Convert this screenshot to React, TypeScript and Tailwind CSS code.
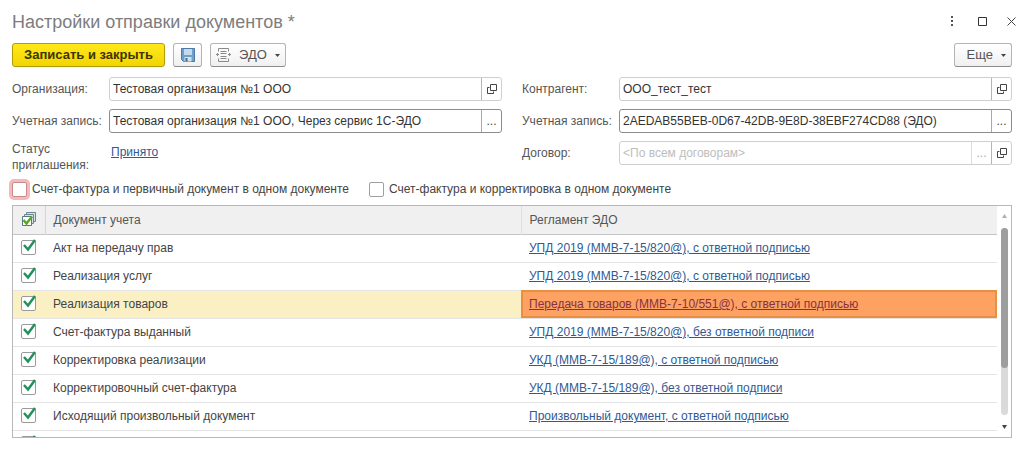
import { useState } from "react";

const documents = [
  { id: 1, name: "Акт на передачу прав", rule: "УПД 2019 (ММВ-7-15/820@), с ответной подписью" },
  { id: 2, name: "Реализация услуг", rule: "УПД 2019 (ММВ-7-15/820@), с ответной подписью" },
  { id: 3, name: "Реализация товаров", rule: "Передача товаров (ММВ-7-10/551@), с ответной подписью" },
  { id: 4, name: "Счет-фактура выданный", rule: "УПД 2019 (ММВ-7-15/820@), без ответной подписи" },
  { id: 5, name: "Корректировка реализации", rule: "УКД (ММВ-7-15/189@), с ответной подписью" },
  { id: 6, name: "Корректировочный счет-фактура", rule: "УКД (ММВ-7-15/189@), без ответной подписи" },
  { id: 7, name: "Исходящий произвольный документ", rule: "Произвольный документ, с ответной подписью" },
  { id: 8, name: "", rule: "" },
];

function OpenIcon() {
  return (
    <svg width="10" height="10" viewBox="0 0 10 10" fill="none" stroke="#444" className="shrink-0">
      <path d="M3.5 0.5h6v6h-6z" />
      <path d="M2.5 3.5h-2v6h6v-2" />
    </svg>
  );
}

function SaveIcon() {
  return (
    <svg width="14" height="14" viewBox="0 0 14 14">
      <path d="M0.5 0.5h13v13h-11l-2-2z" fill="#6fa0cc" stroke="#4b7aa6" />
      <path d="M3 1h8v6H3z" fill="#c3d9ec" />
      <path d="M3.5 9h7v4.5h-7z" fill="#d5e2ec" />
      <path d="M4.5 10h2v3.5h-2z" fill="#3f6d98" />
    </svg>
  );
}

function ExchangeIcon() {
  return (
    <svg width="15" height="14" viewBox="0 0 15 14" fill="none" stroke="#8a8a8a">
      <path d="M2.5 3.5v-3h10v3M2.5 10.5v3h10v-3" />
      <path d="M4.5 3.5h6M4.5 5.5h6M4.5 8.5h6M4.5 10.5h6" />
      <path d="M0 6.5h3M12 6.5h3M1.5 5v3M13.5 5v3" />
    </svg>
  );
}

function CheckAllIcon() {
  return (
    <svg width="16" height="15" viewBox="0 0 16 15">
      <path d="M5.5 0.5h9v9h-9z" fill="#d5e2e4" stroke="#6d8790" />
      <path d="M3.5 2.5h9v9h-9z" fill="#d5e2e4" stroke="#6d8790" />
      <path d="M1.5 4.5h9v9h-9z" fill="#fff" stroke="#5d7780" />
      <path d="M2.5 8l3 3.5l5.5-7" fill="none" stroke="#58a82c" strokeWidth="2.5" />
    </svg>
  );
}

function Caret() {
  return (
    <svg width="5" height="3" viewBox="0 0 5 3" fill="#444">
      <path d="M0 0h5L2.5 3z" />
    </svg>
  );
}

type FieldProps = {
  id: string;
  label: string;
  value?: string;
  placeholder?: string;
  strong?: boolean;
  dots?: boolean;
  open?: boolean;
};

function Field({ id, label, value, placeholder, strong, dots, open }: FieldProps) {
  const border = strong ? "border-[#8c8c8c]" : "border-[#cfcfcf]";
  return (
    <div className="flex items-center">
      <label htmlFor={id} className="w-[97px] shrink-0 whitespace-nowrap text-[#555]">
        {label}
      </label>
      <div className={`flex h-6 min-w-0 flex-1 rounded-[3px] border bg-white ${border}`}>
        <input
          id={id}
          type="text"
          defaultValue={value}
          placeholder={placeholder}
          className="min-w-0 flex-1 px-[3px] text-[#333] outline-none placeholder:text-[#bdbdbd]"
        />
        {dots && (
          <button
            type="button"
            aria-label="Выбрать"
            className={`flex w-5 items-center justify-center border-l ${
              strong ? "border-[#a8a8a8] text-[#444]" : "border-[#dcdcdc] text-[#aaa]"
            }`}
          >
            ...
          </button>
        )}
        {open && (
          <button
            type="button"
            aria-label="Открыть"
            className="flex w-5 items-center justify-center border-l border-[#b5b5b5]"
          >
            <OpenIcon />
          </button>
        )}
      </div>
    </div>
  );
}

export default function App() {
  const [checked, setChecked] = useState<number[]>(documents.map((d) => d.id));
  const [selected, setSelected] = useState(3);

  const toggle = (id: number) =>
    setChecked((prev) => (prev.includes(id) ? prev.filter((x) => x !== id) : [...prev, id]));

  return (
    <div className="min-h-screen bg-white px-3 font-['Liberation_Sans',Arial,sans-serif] text-xs leading-4 text-[#444]">
      {/* Window title */}
      <div className="flex h-[43px] items-center justify-between">
        <h1 className="text-lg leading-5 text-[#7d7d7d]">Настройки отправки документов *</h1>
        <div className="-mr-1 flex items-center gap-5">
          <button type="button" aria-label="Меню" className="flex w-3 justify-center">
            <svg width="3" height="11" viewBox="0 0 3 11" fill="#555">
              <path d="M0 0h2v2H0zM0 4h2v2H0zM0 8h2v2H0z" />
            </svg>
          </button>
          <button type="button" aria-label="Развернуть">
            <svg width="9" height="9" viewBox="0 0 9 9" fill="none" stroke="#333">
              <path d="M0.5 0.5h8v8h-8z" />
            </svg>
          </button>
          <button type="button" aria-label="Закрыть">
            <svg width="9" height="9" viewBox="0 0 9 9" fill="none" stroke="#444">
              <path d="M0.5 0.5l8 8M8.5 0.5l-8 8" />
            </svg>
          </button>
        </div>
      </div>

      {/* Toolbar */}
      <div className="flex items-center text-[13px]">
        <button
          type="button"
          className="h-6 w-[153px] rounded-[3px] border border-[#b39c00] bg-linear-to-b from-[#ffe81a] to-[#f2d500] font-bold text-[#3d3500]"
        >
          Записать и закрыть
        </button>
        <button
          type="button"
          aria-label="Записать"
          className="ml-2 flex h-6 w-[29px] items-center justify-center rounded-[3px] border border-[#b5b5b5] border-b-[#8c8c8c] bg-linear-to-b from-white to-[#f0f0f0]"
        >
          <SaveIcon />
        </button>
        <button
          type="button"
          className="ml-2 flex h-6 items-center gap-2 rounded-[3px] border border-[#b5b5b5] border-b-[#8c8c8c] bg-linear-to-b from-white to-[#f0f0f0] px-[5px] text-[#555]"
        >
          <ExchangeIcon />
          ЭДО
          <Caret />
        </button>
        <button
          type="button"
          className="ml-auto flex h-6 items-center gap-2 rounded-[3px] border border-[#b5b5b5] border-b-[#8c8c8c] bg-linear-to-b from-white to-[#f0f0f0] pr-[5px] pl-3 text-[#555]"
        >
          Еще
          <Caret />
        </button>
      </div>

      {/* Form fields */}
      <div className="mt-[10px] grid grid-cols-2 gap-x-5">
        <div className="flex flex-col gap-2">
          <Field id="org" label="Организация:" value="Тестовая организация №1 ООО" open />
          <Field
            id="org-account"
            label="Учетная запись:"
            value="Тестовая организация №1 ООО, Через сервис 1С-ЭДО"
            strong
            dots
          />
          <div className="flex">
            <span className="w-[99px] shrink-0 text-[#555]">
              Статус
              <br />
              приглашения:
            </span>
            <a href="#status" className="mt-[3px] text-[#2f5a94] underline">
              Принято
            </a>
          </div>
        </div>
        <div className="flex flex-col gap-2">
          <Field id="partner" label="Контрагент:" value="ООО_тест_тест" open />
          <Field
            id="partner-account"
            label="Учетная запись:"
            value="2AEDAB55BEB-0D67-42DB-9E8D-38EBF274CD88 (ЭДО)"
            strong
            dots
          />
          <Field id="contract" label="Договор:" placeholder="<По всем договорам>" dots open />
        </div>
      </div>

      {/* Options */}
      <div className="mt-2 flex items-center gap-5">
        <label className="flex items-center gap-[5px]">
          <input
            type="checkbox"
            className="size-[15px] appearance-none rounded-[2px] border border-[#c98a8a] bg-white ring-3 ring-[#f4b9bb] checked:bg-[#2a9461]"
          />
          Счет-фактура и первичный документ в одном документе
        </label>
        <label className="flex items-center gap-[5px]">
          <input
            type="checkbox"
            className="size-[15px] appearance-none rounded-[2px] border border-[#a0a0a0] bg-white checked:bg-[#2a9461]"
          />
          Счет-фактура и корректировка в одном документе
        </label>
      </div>

      {/* Documents table */}
      <div className="mt-2 flex h-[233px] overflow-hidden border border-[#b8b8b8]">
        <div className="min-w-0 flex-1">
          <table className="w-full table-fixed border-collapse text-left">
            <thead>
              <tr className="h-7 border-b border-[#c4c4c4] bg-[#f0f0f0] text-[#555]">
                <th className="w-8 border-r border-[#d5d5d5] p-0 pl-2 font-normal">
                  <CheckAllIcon />
                </th>
                <th className="border-r border-[#dedede] p-0 pl-2 font-normal">Документ учета</th>
                <th className="p-0 pl-2 font-normal">Регламент ЭДО</th>
              </tr>
            </thead>
            <tbody>
              {documents.map((doc) => (
                <tr
                  key={doc.id}
                  onClick={() => setSelected(doc.id)}
                  className={`h-7 border-b border-[#e4e4e4] ${selected === doc.id ? "bg-[#fbf0c4]" : ""}`}
                >
                  <td className="p-0 pt-[5px] pl-2 align-top">
                    <label className="relative block size-[15px]">
                      <input
                        type="checkbox"
                        aria-label={doc.name || "Документ"}
                        checked={checked.includes(doc.id)}
                        onChange={() => toggle(doc.id)}
                        className="block size-[15px] appearance-none rounded-[2px] border border-[#9a9a9a] bg-white"
                      />
                      {checked.includes(doc.id) && (
                        <svg
                          width="15"
                          height="14"
                          viewBox="0 0 15 14"
                          fill="none"
                          stroke="#22925c"
                          strokeWidth="2.5"
                          className="pointer-events-none absolute -top-px left-px"
                        >
                          <path d="M2 6l4 4.5L13 1" />
                        </svg>
                      )}
                    </label>
                  </td>
                  <td className="p-0 pl-2">{doc.name}</td>
                  <td
                    className={`p-0 pl-2 ${
                      selected === doc.id ? "bg-[#fda262] outline-2 -outline-offset-2 outline-[#e98f43]" : ""
                    }`}
                  >
                    <a
                      href={`#rule-${doc.id}`}
                      className={`underline ${selected === doc.id ? "text-[#8a3040]" : "text-[#2f5a94]"}`}
                    >
                      {doc.rule}
                    </a>
                  </td>
                </tr>
              ))}
            </tbody>
          </table>
        </div>

        {/* Scrollbar */}
        <div className="flex w-[14px] flex-col items-center pt-2 pb-2">
          <svg width="5" height="4" viewBox="0 0 5 4" fill="#b0b0b0">
            <path d="M0 4h5L2.5 0z" />
          </svg>
          <div className="my-[10px] w-[7px] flex-1 rounded-full bg-[#dadada]">
            <div className="h-3/4 rounded-full bg-[#9e9e9e]" />
          </div>
          <svg width="5" height="4" viewBox="0 0 5 4" fill="#444">
            <path d="M0 0h5L2.5 4z" />
          </svg>
        </div>
      </div>
    </div>
  );
}
